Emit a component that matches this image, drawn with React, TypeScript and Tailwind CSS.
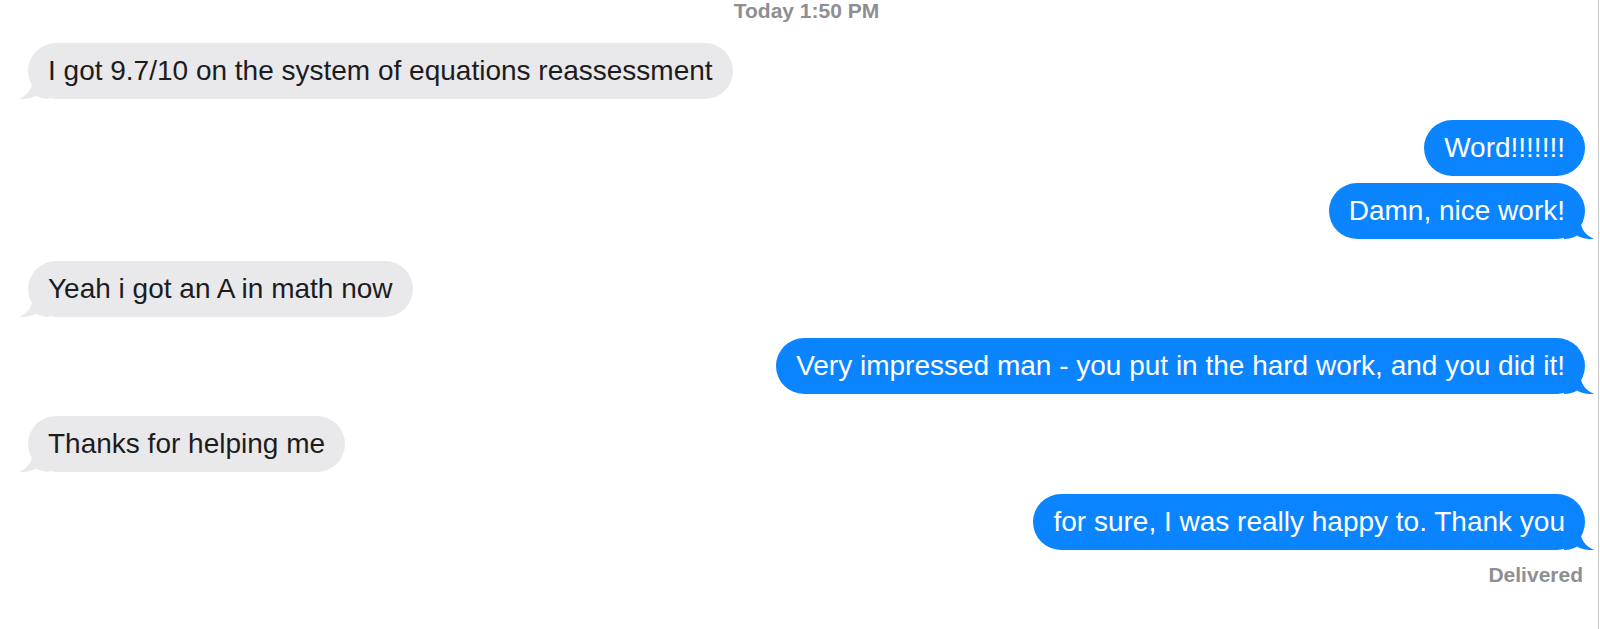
import React from 'react';

type Side = 'left' | 'right';

interface IMessage {
	side: Side;
	text: string;
	gap: string;
	tail: boolean;
}

const messages: IMessage[] = [
	{
		side: 'left',
		text: 'I got 9.7/10 on the system of equations reassessment',
		gap: 'mt-[22px]',
		tail: true,
	},
	{ side: 'right', text: 'Word!!!!!!!', gap: 'mt-[21px]', tail: false },
	{ side: 'right', text: 'Damn, nice work!', gap: 'mt-[7px]', tail: true },
	{
		side: 'left',
		text: 'Yeah i got an A in math now',
		gap: 'mt-[22px]',
		tail: true,
	},
	{
		side: 'right',
		text: 'Very impressed man - you put in the hard work, and you did it!',
		gap: 'mt-[21px]',
		tail: true,
	},
	{ side: 'left', text: 'Thanks for helping me', gap: 'mt-[22px]', tail: true },
	{
		side: 'right',
		text: 'for sure, I was really happy to. Thank you',
		gap: 'mt-[22px]',
		tail: true,
	},
];

function Tail({ side }: { side: Side }) {
	const isLeft = side === 'left';
	return (
		<svg
			width="30"
			height="22"
			viewBox="0 0 30 22"
			className={
				isLeft
					? 'absolute bottom-0 left-[-9px]'
					: 'absolute bottom-0 right-[-9px] scale-x-[-1]'
			}
		>
			<path
				d="M14 0 C14 11 9 18 0 22 C7 22.5 13 21 17 18.5 C20 20.8 25 22 30 22 L30 0 Z"
				fill={isLeft ? '#e9e9eb' : '#0a84ff'}
			/>
		</svg>
	);
}

function Bubble({ msg }: { msg: IMessage }) {
	const isLeft = msg.side === 'left';
	return (
		<div
			className={`flex ${isLeft ? 'justify-start' : 'justify-end'} ${msg.gap}`}
		>
			<div
				className={`relative rounded-[28px] px-5 py-[11px] text-[28px] leading-[34px] whitespace-nowrap ${
					isLeft ? 'bg-[#e9e9eb] text-[#1c1c1e]' : 'bg-[#0a84ff] text-white'
				}`}
			>
				{msg.tail && <Tail side={msg.side} />}
				<span className="relative">{msg.text}</span>
			</div>
		</div>
	);
}

export default function App() {
	return (
		<div className="flex h-[629px] w-[1600px] bg-white font-['Liberation_Sans',Arial,sans-serif]">
			<div className="flex flex-1 flex-col pl-[28px] pr-[13px]">
				<div className="text-center text-[21px] leading-[21px] font-bold text-[#8e8e93]">
					Today 1:50 PM
				</div>
				{messages.map((msg, i) => (
					<Bubble key={i} msg={msg} />
				))}
				<div className="mt-[14px] pr-[2px] text-right text-[21px] leading-[21px] font-bold text-[#8e8e93]">
					Delivered
				</div>
			</div>
			<div className="w-px bg-[#c8c8c8]" />
			<div className="w-px" />
		</div>
	);
}
